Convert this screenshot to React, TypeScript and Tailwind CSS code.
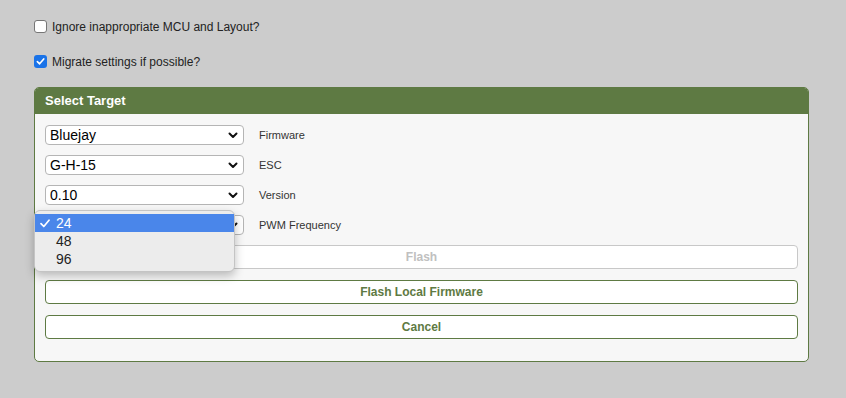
import { ReactNode } from 'react'

const font = { fontFamily: '"Liberation Sans", Arial, sans-serif' }

function Check({ checked, label }: { checked?: boolean; label: string }) {
  return (
    <label className="flex items-center h-[13px] gap-[5px] text-[12px] text-[#222]">
      {checked ? (
        <span className="flex h-[13px] w-[13px] items-center justify-center rounded-[3px] bg-[#1a73e8]">
          <svg width="9" height="9" viewBox="0 0 10 10">
            <path d="M1.5 5.2 L4 7.6 L8.6 2.2" fill="none" stroke="white" strokeWidth="1.8" strokeLinecap="round" strokeLinejoin="round" />
          </svg>
        </span>
      ) : (
        <span className="h-[13px] w-[13px] rounded-[3px] border border-[#767676] bg-white" />
      )}
      <span>{label}</span>
    </label>
  )
}

function Chevron() {
  return (
    <svg width="10" height="7" viewBox="0 0 10 7">
      <path d="M1.5 1.5 L5 5 L8.5 1.5" fill="none" stroke="#111" strokeWidth="2" strokeLinecap="round" strokeLinejoin="round" />
    </svg>
  )
}

function Select({ value, label, open, children }: { value: string; label: string; open?: boolean; children?: ReactNode }) {
  return (
    <div className="relative flex items-center h-[20px]">
      <div className="flex h-[20px] w-[199px] items-center justify-between rounded-[4px] border border-[#b5b5b5] bg-white pl-[4px] pr-[5px] text-[14px] text-black">
        <span className={open ? 'invisible' : ''}>{value}</span>
        <Chevron />
      </div>
      <span className="ml-[15px] text-[11px] text-[#333]">{label}</span>
      {children}
    </div>
  )
}

function Btn({ text, disabled }: { text: string; disabled?: boolean }) {
  return (
    <div
      className={
        'flex h-[24px] items-center justify-center rounded-[4px] border bg-white text-[12px] font-bold ' +
        (disabled ? 'border-[#c8c8c8] text-[#c0c0c0]' : 'border-[#5e7a43] text-[#5e7a43]')
      }
    >
      {text}
    </div>
  )
}

export default function App() {
  return (
    <div style={font} className="min-h-[398px] w-[846px] bg-[#cccccc] pl-[34px] pt-[20px]">
      <Check label="Ignore inappropriate MCU and Layout?" />
      <div className="mt-[22px]">
        <Check checked label="Migrate settings if possible?" />
      </div>

      <div className="mt-[19px] w-[775px] rounded-[5px] border border-[#5e7a43] bg-[#f7f7f7]">
        <div className="flex h-[26px] items-center rounded-t-[4px] bg-[#5e7a43] px-[10px] text-[13px] font-bold text-white">
          Select Target
        </div>
        <div className="flex flex-col gap-[10px] px-[10px] pt-[11px] pb-[22px]">
          <Select value="Bluejay" label="Firmware" />
          <Select value="G-H-15" label="ESC" />
          <Select value="0.10" label="Version" />
          <Select value="24" label="PWM Frequency" open>
            <div className="absolute left-[-11px] top-[-5px] z-10 w-[201px] rounded-[6px] border border-[#c4c4c4] bg-[#ececec] py-[3px] text-[14px] text-[#222] shadow-[0_4px_10px_rgba(0,0,0,0.25)]">
              <div className="flex h-[18px] items-center bg-[#4a86ea] text-white">
                <span className="w-[21px] pl-[5px]">
                  <svg width="10" height="9" viewBox="0 0 10 9">
                    <path d="M1 4.6 L3.8 7.5 L9 1.2" fill="none" stroke="white" strokeWidth="1.7" strokeLinecap="round" strokeLinejoin="round" />
                  </svg>
                </span>
                <span>24</span>
              </div>
              <div className="flex h-[18px] items-center pl-[21px]">48</div>
              <div className="flex h-[18px] items-center pl-[21px]">96</div>
            </div>
          </Select>
          <Btn text="Flash" disabled />
          <div className="flex flex-col gap-[11px] pt-px">
            <Btn text="Flash Local Firmware" />
            <Btn text="Cancel" />
          </div>
        </div>
      </div>
    </div>
  )
}
